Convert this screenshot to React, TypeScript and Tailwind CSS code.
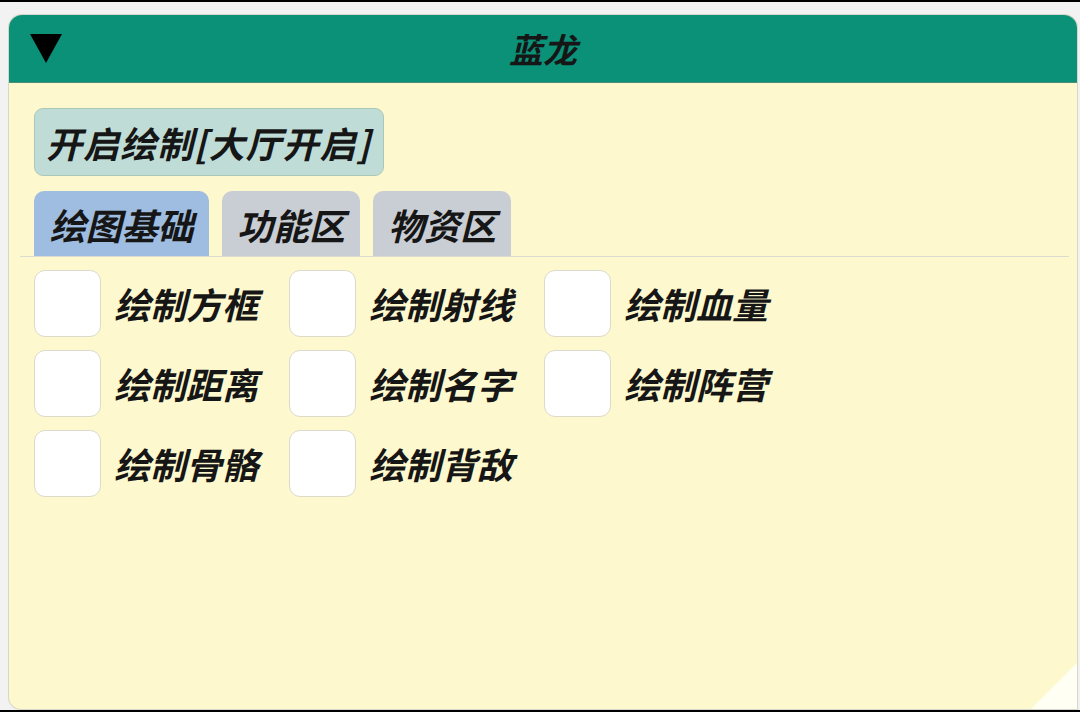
import React from 'react';

const font = { fontFamily: '"Noto Sans CJK SC", "Noto Sans", sans-serif' };

const tabs = [
  { label: '绘图基础', active: true, w: 'w-[175px]' },
  { label: '功能区', active: false, w: 'w-[138px]' },
  { label: '物资区', active: false, w: 'w-[138px]' },
];

const options = [
  '绘制方框', '绘制射线', '绘制血量',
  '绘制距离', '绘制名字', '绘制阵营',
  '绘制骨骼', '绘制背敌',
];

const Checkbox: React.FC<{ label: string }> = ({ label }) => (
  <label className="flex items-center gap-[13px] h-[66px]">
    <span className="w-[67px] h-[67px] shrink-0 rounded-[11px] bg-white border border-[#dcdacb]" />
    <span className="text-[36px] font-bold italic text-[#161616] leading-none">{label}</span>
  </label>
);

export default function App() {
  return (
    <div style={font} className="h-[712px] w-full bg-[#f2f2f2] border-y-2 border-black flex flex-col overflow-hidden">
      <div className="relative flex-1 ml-[9px] mr-[3px] mt-[13px] mb-[1px] rounded-t-[13px] rounded-bl-[12px] overflow-hidden bg-[#fdf8cd] shadow-[0_0_0_1px_#d6d6cc] flex flex-col">
        <header className="h-[68px] shrink-0 bg-[#0b9178] grid grid-cols-[1fr_auto_1fr] items-center border-b border-[#4c8c78]">
          <div className="pl-[21px]">
            <svg width="32" height="29" viewBox="0 0 32 29">
              <polygon points="0,0 32,0 16,29" fill="#000" />
            </svg>
          </div>
          <h1 className="text-[34px] font-bold italic text-[#161616] leading-none">蓝龙</h1>
          <div />
        </header>

        <div className="flex-1 pt-[25px] relative">
          <div className="pl-[25px]">
            <button className="h-[68px] pl-[11px] pr-[12px] rounded-[9px] bg-[#bfdcd6] border border-[#a9c8b8] text-[36px] font-bold italic tracking-[1px] text-[#161616] leading-none">
              开启绘制[大厅开启]
            </button>
          </div>

          <div className="mt-[15px] ml-[11px] mr-[8px] border-b border-[#dcdcd0] flex gap-[13px] pl-[14px]">
            {tabs.map((t) => (
              <div
                key={t.label}
                className={`${t.w} h-[65px] rounded-t-[10px] flex items-center justify-center text-[36px] font-bold italic text-[#161616] leading-none ${t.active ? 'bg-[#9ebde0]' : 'bg-[#c9cdd4]'}`}
              >
                {t.label}
              </div>
            ))}
          </div>

          <div className="pl-[25px] pt-[13px] grid grid-cols-[255px_255px_255px] gap-y-[14px]">
            {options.map((o) => (
              <Checkbox key={o} label={o} />
            ))}
          </div>

          <svg className="absolute right-0 bottom-0" width="46" height="46" viewBox="0 0 46 46">
            <polygon points="46,0 46,46 0,46" fill="#fffff4" />
          </svg>
        </div>
      </div>
    </div>
  );
}
